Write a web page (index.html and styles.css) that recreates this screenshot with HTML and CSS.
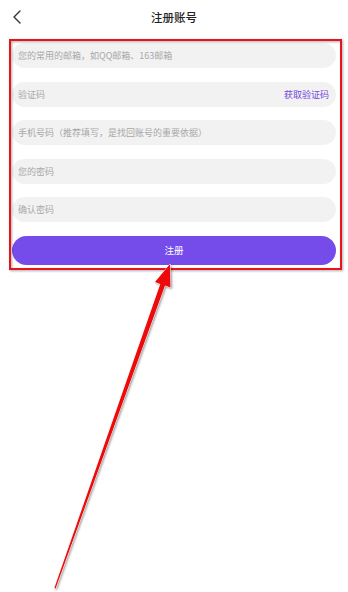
FILE: index.html
```html
<!DOCTYPE html>
<html lang="zh-CN">
<head>
    <meta charset="UTF-8">
    <meta name="viewport" content="width=device-width, initial-scale=1.0">
    <title>注册账号</title>
    <link rel="stylesheet" href="styles.css">
</head>
<body>
    <header class="top-bar">
        <a class="back" href="#">
            <svg width="14" height="16" viewBox="0 0 14 16"><polyline points="10,2 4,8 10,14" fill="none" stroke="#333" stroke-width="1.4" stroke-linecap="round" stroke-linejoin="round"/></svg>
        </a>
        <h1>注册账号</h1>
    </header>

    <form class="reg-form">
        <div class="field"><input type="text" placeholder="您的常用的邮箱，如QQ邮箱、163邮箱"></div>
        <div class="field">
            <input type="text" placeholder="验证码">
            <span class="get-code">获取验证码</span>
        </div>
        <div class="field"><input type="text" placeholder="手机号码（推荐填写，是找回账号的重要依据）"></div>
        <div class="field"><input type="password" placeholder="您的密码"></div>
        <div class="field"><input type="password" placeholder="确认密码"></div>
        <button type="button" class="submit">注册</button>
    </form>

    <!-- annotation drawn over the page -->
    <svg class="mark" width="348" height="592" viewBox="0 0 348 592">
        <rect class="mark-box" x="10" y="40" width="331" height="229"/>
        <polygon class="mark-arrow" points="170,264 170.5,287.5 165,285.5 55.6,588.5 54.4,588 160.3,283.9 155,282"/>
    </svg>
</body>
</html>
```

FILE: styles.css
```css
body {
    margin: 0;
    font-family: "Noto Sans CJK SC", "Noto Sans", sans-serif;
    background: #fff;
    color: #222;
    width: 348px;
    height: 592px;
    position: relative;
    overflow: hidden;
}
.top-bar {
    height: 34px;
    display: flex;
    align-items: center;
    justify-content: center;
    position: relative;
}
.top-bar h1 {
    margin: 0;
    font-size: 11.5px;
    font-weight: 500;
    color: #222;
}
.back {
    position: absolute;
    left: 10px;
    top: 9px;
    display: flex;
}
.reg-form {
    padding: 9px 12px 0;
    display: flex;
    flex-direction: column;
    gap: 13.5px;
}
.field {
    height: 25px;
    border-radius: 13px;
    background: #f2f2f2;
    display: flex;
    align-items: center;
    padding: 0 7px 0 6px;
}
.field input {
    flex: 1;
    min-width: 0;
    border: none;
    outline: none;
    background: transparent;
    padding: 0;
    font-family: inherit;
    font-size: 9px;
    color: #333;
}
.field input::placeholder {
    color: #a8a8a8;
}
.get-code {
    font-size: 9px;
    color: #7446e0;
}
.submit {
    height: 29px;
    border: none;
    border-radius: 15px;
    background: #754bea;
    color: #fff;
    font-family: inherit;
    font-size: 9.5px;
    cursor: pointer;
}
.mark {
    position: absolute;
    left: 0;
    top: 0;
    pointer-events: none;
}
.mark-box {
    fill: none;
    stroke: #e8141b;
    stroke-width: 2;
    filter: drop-shadow(1px 1px 1px rgba(0, 0, 0, 0.35));
}
.mark-arrow {
    fill: #ee0a0a;
    stroke: #fff;
    stroke-width: 1;
    stroke-linejoin: round;
    paint-order: stroke;
    filter: drop-shadow(1px 1px 1px rgba(0, 0, 0, 0.4));
}
```
